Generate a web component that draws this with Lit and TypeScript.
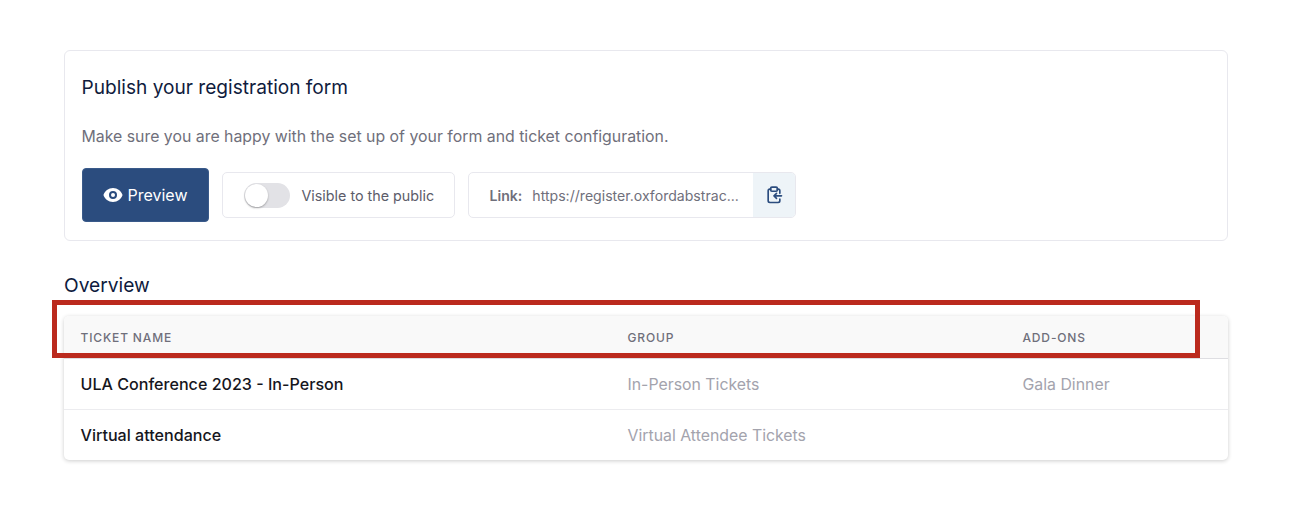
import { LitElement, html, css } from "lit";
import { customElement } from "lit/decorators.js";

@customElement("app-root")
export class AppRoot extends LitElement {
  static styles = css`
    :host { display: block; position: relative; width: 1296px; height: 532px; background: #fff; overflow: hidden; font-family: Inter, "Liberation Sans", sans-serif; box-sizing: border-box; padding: 50px 68px 0 64px; }
    * { box-sizing: border-box; }
    .card { height: 191px; border: 1px solid #e8e8ee; border-radius: 6px; padding: 24px 17px 0 16.500px; }
    h2 { margin: 0; font-size: 19.100px; line-height: 24px; font-weight: 400; color: #0f1b3d; }
    .desc { margin: 28px 0 0; font-size: 15.850px; line-height: 20px; color: #6f6f7b; }
    .actions { display: flex; align-items: center; margin-top: 21px; }
    .preview { width: 127px; height: 54px; border-radius: 4px; background: #2b4c7e; border: 1px solid #3a5a8a; color: #fff; display: flex; align-items: center; justify-content: center; gap: 5px; font-size: 16px; margin-right: 13px; }
    .visible { width: 233px; height: 46px; border: 1px solid #e8e8ee; border-radius: 5px; display: flex; align-items: center; padding-left: 21px; gap: 12px; font-size: 14.300px; color: #5c5c6a; margin-right: 13px; }
    .toggle { width: 46px; height: 25px; border-radius: 13px; background: #e2e2e6; position: relative; }
    .knob { position: absolute; left: 1px; top: 1px; width: 23px; height: 23px; border-radius: 50%; background: #fff; box-shadow: 0 1px 2px rgba(0,0,0,.3); }
    .link { width: 328px; height: 46px; border: 1px solid #e8e8ee; border-radius: 5px; display: flex; align-items: center; overflow: hidden; font-size: 14.100px; color: #6f6f7b; }
    .link b { font-weight: 600; margin-left: 21px; margin-right: 10px; }
    .url { flex: 1; white-space: nowrap; }
    .copy { width: 42px; height: 100%; background: #eef4f8; display: flex; align-items: center; justify-content: center; }
    h3 { margin: 32px 0 0; font-size: 19.200px; line-height: 24px; font-weight: 400; color: #0f1b3d; }
    .table { margin-top: 19px; height: 144px; border-radius: 5px; box-shadow: 0 1px 4px rgba(0,0,0,.2); }
    .row { display: grid; grid-template-columns: 547px 395px 1fr; align-items: center; padding-left: 16.500px; }
    .head { height: 43px; background: #f9f9f9; border-bottom: 1px solid #dedee2; border-radius: 5px 5px 0 0; font-size: 12px; font-weight: 500; letter-spacing: .85px; color: #6f6f7b; }
    .body { height: 50px; font-size: 15.850px; color: #a3a3ad; }
    .body + .body { border-top: 1px solid #ececef; height: 51px; }
    .name { color: #16161d; font-weight: 500; font-size: 16.100px; }
    .mark { position: absolute; left: 52px; top: 300px; width: 1148px; height: 58px; border: 5px solid #bb2a1e; pointer-events: none; }
  `;

  render() {
    return html`
      <section class="card">
        <h2>Publish your registration form</h2>
        <p class="desc">Make sure you are happy with the set up of your form and ticket configuration.</p>
        <div class="actions">
          <div class="preview">
            <svg width="20" height="20" viewBox="0 0 20 20" fill="#fff"><path d="M10 12a2 2 0 1 0 0-4 2 2 0 0 0 0 4z"/><path fill-rule="evenodd" d="M.46 10C1.73 5.94 5.52 3 10 3s8.27 2.94 9.54 7c-1.27 4.06-5.06 7-9.54 7S1.73 14.06.46 10zM14 10a4 4 0 1 1-8 0 4 4 0 0 1 8 0z"/></svg>
            Preview
          </div>
          <div class="visible"><span class="toggle"><span class="knob"></span></span>Visible to the public</div>
          <div class="link">
            <b>Link:</b><span class="url">https://register.oxfordabstrac...</span>
            <span class="copy">
              <svg width="20" height="20" viewBox="0 0 24 24" fill="none" stroke="#2b4c7e" stroke-width="2" stroke-linecap="round" stroke-linejoin="round"><path d="M8 5H7a2 2 0 0 0-2 2v12a2 2 0 0 0 2 2h10a2 2 0 0 0 2-2v-2"/><path d="M16 5h1a2 2 0 0 1 2 2v3"/><rect x="8" y="2.500" width="8" height="5" rx="1.500"/><path d="M21 13h-9m3-3-3 3 3 3"/></svg>
            </span>
          </div>
        </div>
      </section>
      <h3>Overview</h3>
      <div class="table">
        <div class="row head"><span>TICKET NAME</span><span>GROUP</span><span>ADD-ONS</span></div>
        <div class="row body"><span class="name">ULA Conference 2023 - In-Person</span><span>In-Person Tickets</span><span>Gala Dinner</span></div>
        <div class="row body"><span class="name">Virtual attendance</span><span>Virtual Attendee Tickets</span><span></span></div>
      </div>
      <div class="mark"></div>
    `;
  }
}
